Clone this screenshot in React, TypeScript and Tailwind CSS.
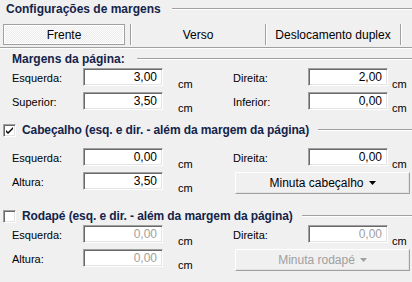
import React from 'react'

const font = { fontFamily: '"Liberation Sans", Arial, sans-serif' }

// Etched separator line, as in classic Windows group headings
function Etch({ className = '' }: { className?: string }) {
  return <div className={`h-[2px] border-t border-[#a0a0a0] border-b border-b-white ${className}`} />
}

function Field({ value, disabled }: { value: string; disabled?: boolean }) {
  return (
    <div
      className={`w-[80px] h-[18px] bg-white border border-t-[#a0a0a0] border-l-[#a0a0a0] border-r-white border-b-white shadow-[inset_1px_1px_0_#696969,inset_-1px_-1px_0_#e3e3e3] flex items-center justify-end pr-[5px] text-[12px] ${
        disabled ? 'text-[#a0a0a0]' : 'text-black'
      }`}
    >
      {value}
    </div>
  )
}

function Row({
  left,
  leftValue,
  right,
  rightValue,
  disabled,
  button,
}: {
  left: string
  leftValue: string
  right?: string
  rightValue?: string
  disabled?: boolean
  button?: React.ReactNode
}) {
  return (
    <div className="flex h-[24px] text-black">
      <div className="flex w-[233px] pl-[12px]">
        <div className="w-[71px] pt-[2px] text-[11px]">{left}</div>
        <Field value={leftValue} disabled={disabled} />
        <div className="ml-[15px] mt-[8px] text-[11px]">cm</div>
      </div>
      {button ? (
        <div className="ml-[2px]">{button}</div>
      ) : (
        <div className="flex">
          <div className="w-[75px] pt-[2px] text-[11px]">{right}</div>
          <Field value={rightValue ?? ''} disabled={disabled} />
          <div className="ml-[4px] mt-[8px] text-[11px]">cm</div>
        </div>
      )}
    </div>
  )
}

function MenuButton({ label, disabled }: { label: string; disabled?: boolean }) {
  return (
    <div
      className={`w-[175px] h-[22px] flex items-center justify-center gap-[5px] bg-[#f0f0f0] border border-t-white border-l-white border-r-[#a0a0a0] border-b-[#a0a0a0] shadow-[inset_-1px_-1px_0_#e3e3e3] text-[12px] ${
        disabled ? 'text-[#a0a0a0]' : 'text-black'
      }`}
    >
      <span>{label}</span>
      <svg width="7" height="4" viewBox="0 0 7 4">
        <path d="M0 0h7L3.5 4z" fill={disabled ? '#a0a0a0' : '#000'} />
      </svg>
    </div>
  )
}

function CheckHeading({ label, checked }: { label: string; checked?: boolean }) {
  return (
    <div className="flex items-center h-[16px] pl-[3px]">
      <div className="w-[13px] h-[13px] bg-white border border-t-[#a0a0a0] border-l-[#a0a0a0] border-r-white border-b-white shadow-[inset_1px_1px_0_#696969,inset_-1px_-1px_0_#e3e3e3] flex items-center justify-center">
        {checked && (
          <svg width="9" height="9" viewBox="0 0 9 9">
            <path d="M1 4l2 2 5-5v2L3 8 1 6z" fill="#000" />
          </svg>
        )}
      </div>
      <div className="ml-[6px] text-[12px] font-bold text-[#13234a] tracking-[-0.1px] whitespace-nowrap">{label}</div>
      <Etch className="flex-1 ml-[9px]" />
    </div>
  )
}

export default function App() {
  return (
    <div className="w-[412px] h-[282px] bg-[#f0f0f0] overflow-hidden" style={font}>
      {/* Title */}
      <div className="flex items-center h-[16px] pt-[2px] pl-[6px]">
        <div className="text-[12px] font-bold text-[#13234a] whitespace-nowrap">Configurações de margens</div>
        <Etch className="flex-1 ml-[11px]" />
      </div>

      {/* Tabs */}
      <div className="flex mt-[8px] h-[21px] text-[12px] text-black">
        <div className="ml-[3px] w-[122px] h-[21px] flex items-center justify-center border border-[#a0a0a0] shadow-[inset_1px_1px_0_#fff,inset_-1px_-1px_0_#fff] bg-[conic-gradient(#fdfdfd_25%,#ebebeb_0_50%,#fdfdfd_0_75%,#ebebeb_0)] bg-[length:2px_2px]">
          Frente
        </div>
        <div className="ml-[5px] w-[135px] flex items-center justify-center border-l border-[#a0a0a0] shadow-[inset_1px_0_0_#fff]">Verso</div>
        <div className="w-[135px] flex items-center justify-center border-l border-[#a0a0a0] shadow-[inset_1px_0_0_#fff]">Deslocamento duplex</div>
        <div className="border-l border-[#a0a0a0] shadow-[inset_1px_0_0_#fff] w-[2px]" />
      </div>
      <Etch className="mt-[2px]" />

      {/* Margens da página */}
      <div className="flex items-center h-[14px] mt-[3px] pl-[12px]">
        <div className="text-[12px] font-bold text-[#13234a] whitespace-nowrap">Margens da página:</div>
        <Etch className="flex-1 ml-[12px]" />
      </div>
      <div className="mt-[2px]">
        <Row left="Esquerda:" leftValue="3,00" right="Direita:" rightValue="2,00" />
        <Row left="Superior:" leftValue="3,50" right="Inferior:" rightValue="0,00" />
      </div>

      {/* Cabeçalho */}
      <div className="mt-[6px]">
        <CheckHeading label="Cabeçalho (esq. e dir. - além da margem da página)" checked />
      </div>
      <div className="mt-[10px]">
        <Row left="Esquerda:" leftValue="0,00" right="Direita:" rightValue="0,00" />
        <Row left="Altura:" leftValue="3,50" button={<MenuButton label="Minuta cabeçalho" />} />
      </div>

      {/* Rodapé */}
      <div className="mt-[12px]">
        <CheckHeading label="Rodapé (esq. e dir. - além da margem da página)" />
      </div>
      <div className="mt-[1px]">
        <Row left="Esquerda:" leftValue="0,00" right="Direita:" rightValue="0,00" disabled />
        <Row left="Altura:" leftValue="0,00" button={<MenuButton label="Minuta rodapé" disabled />} disabled />
      </div>
    </div>
  )
}
